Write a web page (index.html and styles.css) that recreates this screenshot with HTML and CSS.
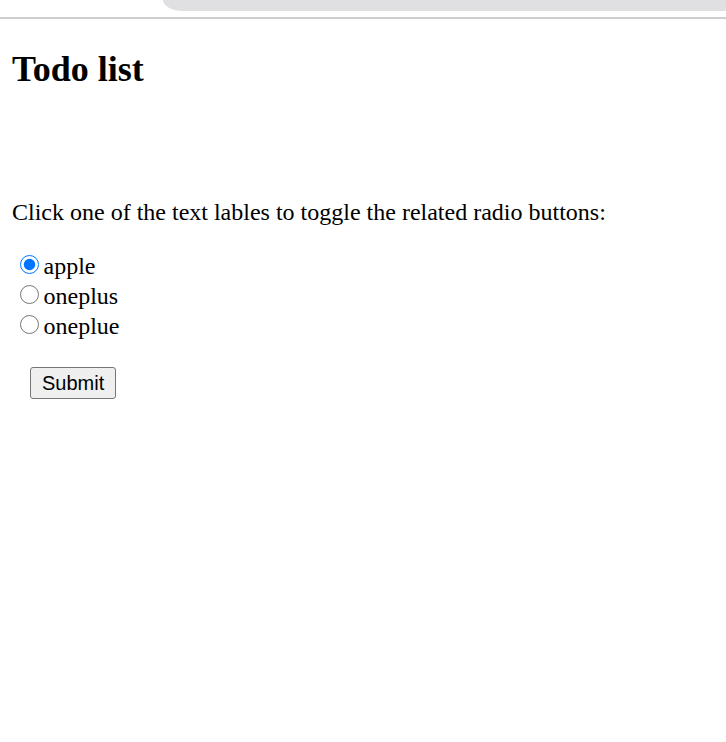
FILE: index.html
```html
<!DOCTYPE html>
<html lang="en">
<head>
<meta charset="utf-8">
<title>Todo list</title>
<link rel="stylesheet" href="styles.css">
</head>
<body>
<div class="chrome">
  <div class="tab"></div>
</div>
<div class="chrome-line"></div>
<main class="page">
  <h1 class="title">Todo list</h1>
  <div class="spacer"></div>
  <p class="intro">Click one of the text lables to toggle the related radio buttons:</p>
  <form class="choices">
    <label class="choice"><input type="radio" name="phone" value="apple" checked>apple</label>
    <label class="choice"><input type="radio" name="phone" value="oneplus">oneplus</label>
    <label class="choice"><input type="radio" name="phone" value="oneplue">oneplue</label>
    <div class="actions"><button type="button" class="submit">Submit</button></div>
  </form>
</main>
</body>
</html>
```

FILE: styles.css
```css
html, body {
  margin: 0;
  padding: 0;
  background: #ffffff;
}

body {
  font-family: "Liberation Serif", "Times New Roman", serif;
  color: #000000;
}

.chrome {
  height: 17px;
  display: flex;
  background: #ffffff;
}

.tab {
  margin-left: 163px;
  flex: 1;
  height: 11px;
  background: #e0e0e2;
  border-bottom-left-radius: 20px 11px;
}

.chrome-line {
  height: 2px;
  background: #cdcdcd;
}

.page {
  padding: 0 12px;
  display: flow-root;
}

.title {
  font-size: 36px;
  font-weight: bold;
  margin: 29px 0 30px;
  line-height: normal;
}

.spacer {
  height: 79px;
}

.intro {
  font-size: 24px;
  margin: 0 0 24px;
  line-height: normal;
}

.choices {
  display: flex;
  flex-direction: column;
  font-size: 24px;
}

.choice {
  display: block;
  line-height: normal;
}

.choice input {
  width: 19.5px;
  height: 19.5px;
  margin: 4.5px 4.5px 0 7.5px;
  vertical-align: baseline;
  accent-color: #0075ff;
}

.actions {
  margin-top: 27px;
  padding-left: 18px;
  line-height: normal;
}

.submit {
  font-family: "Liberation Sans", Arial, sans-serif;
  font-size: 20px;
  height: 32px;
  padding: 0 11px;
  background: #efefef;
  border: 1px solid #767676;
  border-radius: 3px;
  color: #000000;
}
```
